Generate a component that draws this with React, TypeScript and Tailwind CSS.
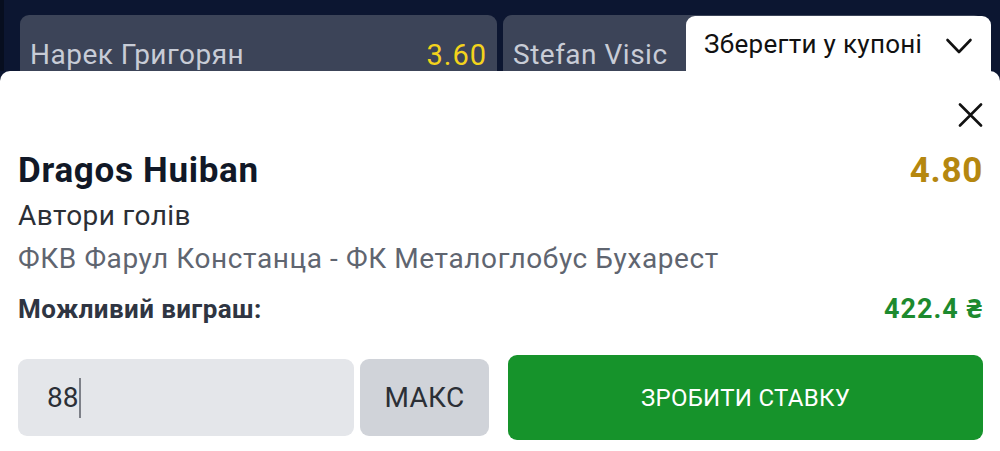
import React from 'react';

const font = { fontFamily: 'Roboto, "Noto Sans", sans-serif' };

const TopCard: React.FC<{ name: string; odds?: string; className?: string }> = ({ name, odds, className }) => (
  <div className={`flex h-[56px] items-start justify-between rounded-t-[9px] bg-[#3c4458] px-[10px] pt-[25px] ${className ?? ''}`}>
    <span className="text-[28px] leading-[30px] tracking-[0.5px] text-[#c8ccd6]">{name}</span>
    {odds && <span className="text-[29px] leading-[30px] tracking-[1px] text-[#f3d31c]">{odds}</span>}
  </div>
);

const App: React.FC = () => {
  const stake = '88';

  return (
    <div className="h-[451px] w-[1000px] overflow-hidden bg-[#0c1631]" style={font}>
      <div className="flex h-[71px] border-l-[4px] border-[#070e1f] pl-[16px] pt-[15px]">
        <TopCard name="Нарек Григорян" odds="3.60" className="w-[477px] shrink-0" />
        <TopCard name="Stefan Visic" className="ml-[6px] w-[480px] shrink-0" />
      </div>

      <div className="relative h-[380px] rounded-t-[10px] bg-white pl-[18px] pr-[17px] pt-[32px]">
        {/* coupon tab sticking up from the sheet */}
        <div className="absolute right-[9px] top-[-55px] flex h-[56px] w-[305px] items-start justify-between rounded-t-[9px] bg-white pl-[18px] pr-[18px] pt-[13px]">
          <span className="text-[26px] leading-[30px] tracking-[0.3px] text-[#111111]">Зберегти у купоні</span>
          <svg width="28" height="28" viewBox="0 0 28 28" className="mt-[3px]" fill="none" stroke="#111" strokeWidth="2.6" strokeLinecap="round" strokeLinejoin="round">
            <path d="M2.5 8l11.5 12 11.5-12" />
          </svg>
        </div>

        <div className="flex h-[24px] justify-end">
          <svg width="25" height="24" viewBox="0 0 25 24" fill="none" stroke="#111" strokeWidth="2.6" strokeLinecap="round">
            <path d="M2 1.5l21 21M23 1.5l-21 21" />
          </svg>
        </div>

        <div className="mt-[25px] flex h-[38px] items-center justify-between">
          <span className="text-[35px] font-bold leading-[38px] tracking-[0.7px] text-[#111827]">Dragos Huiban</span>
          <span className="text-[35px] font-bold leading-[38px] tracking-[0.7px] text-[#b5870f]">4.80</span>
        </div>

        <div className="mt-[5px] text-[28px] leading-[41px] tracking-[0.4px] text-[#2b2f36]">Автори голів</div>
        <div className="mt-[2px] text-[28px] leading-[41px] tracking-[0.6px] text-[#5f6570]">ФКВ Фарул Констанца - ФК Металоглобус Бухарест</div>

        <div className="mt-[14px] flex h-[32px] items-center justify-between">
          <span className="text-[26px] font-bold leading-[32px] tracking-[0.4px] text-[#2f3542]">Можливий виграш:</span>
          <span className="text-[27px] font-bold leading-[32px] tracking-[1px] text-[#1d8a2e]">422.4 ₴</span>
        </div>

        <div className="mt-[30px] flex h-[85px] items-center">
          <div className="flex h-[77px] w-[336px] items-center rounded-[9px] bg-[#e4e6ea] pl-[29px]">
            <span className="text-[28px] leading-[32px] text-[#2b2f36]">{stake}</span>
            <span className="ml-[1px] h-[40px] w-[2px] bg-[#7d8088]" />
          </div>
          <button className="ml-[6px] flex h-[77px] w-[129px] items-center justify-center rounded-[9px] bg-[#d0d3d9] text-[28px] tracking-[0.3px] text-[#2b2f36]">
            МАКС
          </button>
          <button className="ml-[19px] flex h-[85px] flex-1 items-center justify-center rounded-[9px] bg-[#16932b] text-[24px] tracking-[0.3px] text-white">
            ЗРОБИТИ СТАВКУ
          </button>
        </div>
      </div>
    </div>
  );
};

export default App;
